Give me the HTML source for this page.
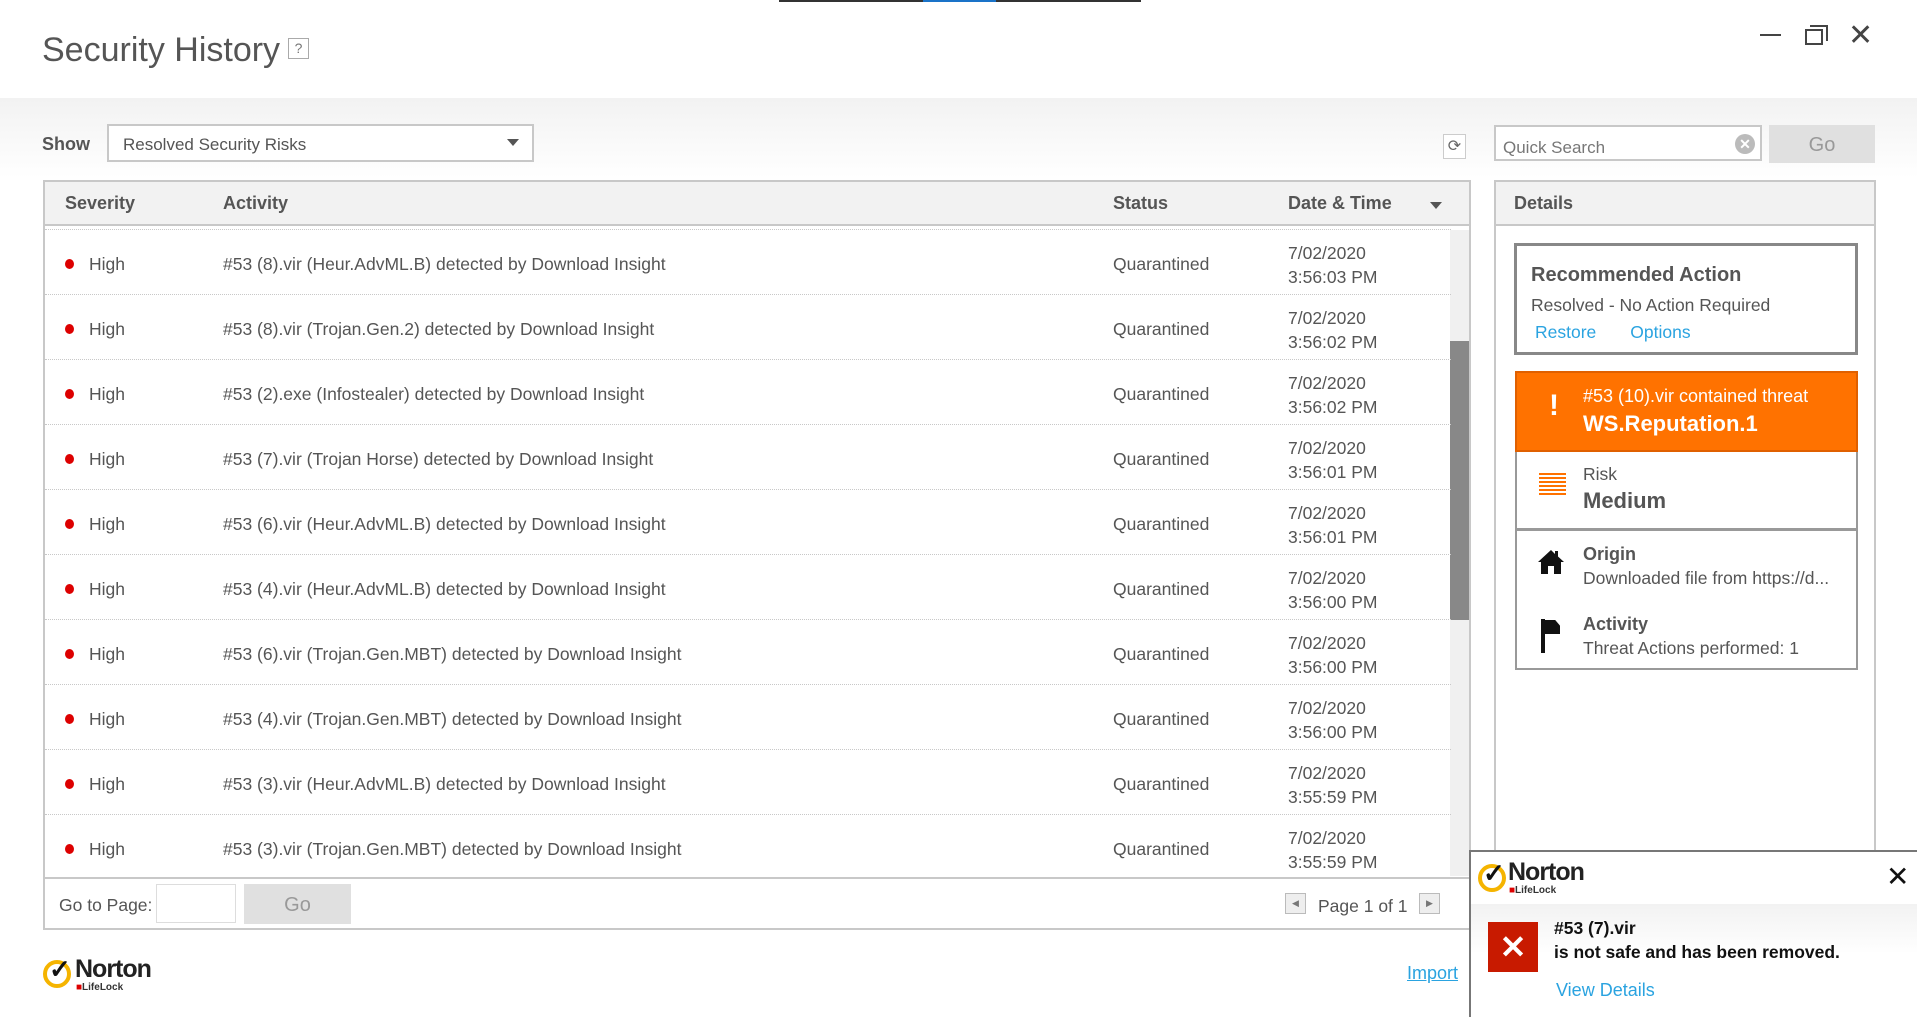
<!DOCTYPE html>
<html><head><meta charset="utf-8"><style>
*{box-sizing:border-box;margin:0;padding:0}
html{width:1917px;height:1017px;overflow:hidden}
body{width:1917px;height:1017px;position:relative;overflow:hidden;background:#fff;font-family:"Liberation Sans",sans-serif;color:#555}
.a{position:absolute}
.band{left:0;top:98px;width:1917px;height:80px;background:linear-gradient(#f2f2f2,#fff)}
.row{position:absolute;left:0;width:1406px;height:65px;border-bottom:1px dotted #c8c8c8;font-size:17.5px;color:#555}
.row span{position:absolute}
.dot{left:20px;top:29px;width:9px;height:10px;border-radius:50%;background:#d00}
.link{color:#2aa3e0}
</style></head><body>
<div class="a" style="left:779px;top:0;width:362px;height:2px;background:#333"></div>
<div class="a" style="left:923px;top:0;width:73px;height:2px;background:#1a73c8"></div>
<div class="a band"></div>
<div class="a" style="left:42px;top:31px;font-size:34px;color:#555">Security History</div>
<div class="a" style="left:288px;top:38px;width:21px;height:21px;border:1px solid #aaa;font-size:14px;text-align:center;line-height:19px;color:#777">?</div>
<div class="a" style="left:1760px;top:34px;width:21px;height:2px;background:#444"></div>
<div class="a" style="left:1805px;top:29px;width:18px;height:16px;border:2px solid #444"></div>
<div class="a" style="left:1810px;top:25px;width:18px;height:16px;border-top:2px solid #444;border-right:2px solid #444"></div>
<div class="a" style="left:1848px;top:18px;font-size:30px;color:#444">✕</div>

<div class="a" style="left:42px;top:134px;font-size:18px;font-weight:bold;color:#555">Show</div>
<div class="a" style="left:107px;top:124px;width:427px;height:38px;border:2px solid #c8c8c8;background:#fff;font-size:17px;padding:9px 14px;color:#555">Resolved Security Risks</div>
<div class="a" style="left:507px;top:139px;border-left:6px solid transparent;border-right:6px solid transparent;border-top:7px solid #555"></div>
<div class="a" style="left:1443px;top:134px;width:23px;height:25px;border:1px solid #ccc;background:#fff;font-size:16px;text-align:center;line-height:23px;color:#666">⟳</div>

<div class="a" style="left:1494px;top:125px;width:268px;height:36px;border:2px solid #c8c8c8;background:#fff;font-size:17px;padding:11px 7px 0;color:#777">Quick Search</div>
<div class="a" style="left:1735px;top:134px;width:20px;height:20px;border-radius:50%;background:#bbb;color:#fff;font-size:14px;text-align:center;line-height:20px;font-weight:bold">✕</div>
<div class="a" style="left:1769px;top:125px;width:106px;height:38px;background:#e0e0e0;font-size:20px;text-align:center;line-height:40px;color:#999">Go</div>

<div class="a" style="left:43px;top:180px;width:1428px;height:750px;border:2px solid #c8c8c8;background:#fff;overflow:hidden">
 <div class="a" style="left:0;top:0;width:1428px;height:44px;background:#f2f2f2;border-bottom:2px solid #c8c8c8;font-size:18px;font-weight:bold;color:#555">
  <span class="a" style="left:20px;top:11px">Severity</span>
  <span class="a" style="left:178px;top:11px">Activity</span>
  <span class="a" style="left:1068px;top:11px">Status</span>
  <span class="a" style="left:1243px;top:11px">Date &amp; Time</span>
  <span class="a" style="left:1385px;top:20px;border-left:6px solid transparent;border-right:6px solid transparent;border-top:7px solid #555"></span>
 </div>
 <div class="a" style="left:0;top:47px;width:1406px;height:0;border-top:1px dotted #c8c8c8"></div>
 <div class="a" style="left:1405px;top:48px;width:19px;height:646px;background:#f0f0f0"></div>
 <div class="a" style="left:1405px;top:159px;width:19px;height:279px;background:#888"></div>
 <div id="rows"></div>
 <div class="a" style="left:0;top:695px;width:1428px;height:53px;border-top:2px solid #c8c8c8;background:#fff;font-size:17.5px">
  <span class="a" style="left:14px;top:16px">Go to Page:</span>
  <span class="a" style="left:111px;top:5px;width:80px;height:39px;border:1px solid #ddd"></span>
  <span class="a" style="left:199px;top:5px;width:107px;height:40px;background:#e0e0e0;color:#999;font-size:20px;text-align:center;line-height:42px">Go</span>
  <span class="a" style="left:1240px;top:14px;width:21px;height:21px;border:1px solid #bbb;background:#eee;font-size:9px;text-align:center;line-height:19px;color:#777">◀</span>
  <span class="a" style="left:1273px;top:17px">Page 1 of 1</span>
  <span class="a" style="left:1374px;top:14px;width:21px;height:21px;border:1px solid #bbb;background:#eee;font-size:9px;text-align:center;line-height:19px;color:#777">▶</span>
 </div>
</div>

<div class="a" style="left:1494px;top:180px;width:382px;height:837px;border:2px solid #c8c8c8;border-bottom:none;background:#fff">
 <div class="a" style="left:0;top:0;width:378px;height:44px;background:#f2f2f2;border-bottom:2px solid #c8c8c8;font-size:18px;font-weight:bold;padding:11px 18px">Details</div>
 <div class="a" style="left:18px;top:61px;width:344px;height:112px;border:3px solid #888;padding:18px 14px 0">
  <div style="font-size:20px;font-weight:bold;color:#555">Recommended Action</div>
  <div style="font-size:17.5px;margin-top:8px">Resolved - No Action Required</div>
  <div style="font-size:17.5px;margin-top:6px"><span class="link" style="margin-left:4px">Restore</span><span class="link" style="margin-left:34px">Options</span></div>
 </div>
 <div class="a" style="left:19px;top:189px;width:343px;height:81px;background:#ff7200;border:2px solid #e06000;color:#fff">
  <span class="a" style="left:32px;top:16px;font-size:30px;font-weight:bold">!</span>
  <span class="a" style="left:66px;top:13px;font-size:18px">#53 (10).vir contained threat</span>
  <span class="a" style="left:66px;top:38px;font-size:22px;font-weight:bold">WS.Reputation.1</span>
 </div>
 <div class="a" style="left:19px;top:270px;width:343px;height:78px;border:2px solid #999;border-top:none">
  <span class="a" style="left:22px;top:21px;width:27px;height:22px;background:repeating-linear-gradient(#ff7200 0 2px,#fff 2px 4px)"></span>
  <span class="a" style="left:66px;top:12px;font-size:17.5px">Risk</span>
  <span class="a" style="left:66px;top:36px;font-size:22px;font-weight:bold">Medium</span>
 </div>
 <div class="a" style="left:19px;top:347px;width:343px;height:141px;border:2px solid #999">
  <svg class="a" style="left:20px;top:18px" width="28" height="26" viewBox="0 0 28 26"><path d="M14 1 L1 13 L4 13 L4 25 L11 25 L11 17 L17 17 L17 25 L24 25 L24 13 L27 13 L21 7.5 L21 2 L18 2 L18 5 Z" fill="#111"/></svg>
  <span class="a" style="left:66px;top:13px;font-size:18px;font-weight:bold">Origin</span>
  <span class="a" style="left:66px;top:37px;font-size:17.5px">Downloaded file from https://d...</span>
  <span class="a" style="left:24px;top:88px;width:4px;height:34px;background:#111"></span>
  <span class="a" style="left:27px;top:89px;width:16px;height:14px;background:#111;clip-path:polygon(0 0,70% 0,100% 40%,100% 100%,0 100%)"></span>
  <span class="a" style="left:66px;top:83px;font-size:18px;font-weight:bold">Activity</span>
  <span class="a" style="left:66px;top:107px;font-size:17.5px">Threat Actions performed: 1</span>
 </div>
</div>

<div class="a" style="left:43px;top:960px;width:28px;height:28px;border-radius:50%;border:4px solid #f5b400"></div>
<div class="a" style="left:49px;top:954px;font-size:26px;font-weight:bold;color:#111">✓</div>
<div class="a" style="left:75px;top:955px;font-size:25px;font-weight:bold;color:#222;letter-spacing:-1px">Norton</div>
<div class="a" style="left:76px;top:982px;font-size:10px;font-weight:bold;color:#333"><span style="color:#d00">■</span>LifeLock</div>
<div class="a" style="left:1407px;top:963px;font-size:18px;color:#2aa3e0;text-decoration:underline">Import</div>

<div class="a" style="left:1469px;top:850px;width:448px;height:167px;border:2px solid #777;border-right:none;border-bottom:none;background:#fff;overflow:hidden">
 <div class="a" style="left:0;top:52px;width:448px;height:50px;background:linear-gradient(#f2f2f2,#fff)"></div>
 <div class="a" style="left:7px;top:12px;width:28px;height:28px;border-radius:50%;border:4px solid #f5b400"></div>
 <div class="a" style="left:12px;top:6px;font-size:26px;font-weight:bold;color:#111">✓</div>
 <div class="a" style="left:37px;top:6px;font-size:25px;font-weight:bold;color:#222;letter-spacing:-1px">Norton</div>
 <div class="a" style="left:38px;top:33px;font-size:10px;font-weight:bold;color:#333"><span style="color:#d00">■</span>LifeLock</div>
 <div class="a" style="left:415px;top:8px;font-size:28px;color:#111">✕</div>
 <div class="a" style="left:17px;top:70px;width:50px;height:50px;background:#c81a00;color:#fff;font-size:32px;font-weight:bold;text-align:center;line-height:50px">✕</div>
 <div class="a" style="left:83px;top:66px;font-size:17.5px;font-weight:bold;color:#111">#53 (7).vir</div>
 <div class="a" style="left:83px;top:90px;font-size:17.5px;font-weight:bold;color:#111">is not safe and has been removed.</div>
 <div class="a" style="left:85px;top:128px;font-size:18px;color:#2aa3e0">View Details</div>
</div>

<script>
var d=[["#53 (8).vir (Heur.AdvML.B) detected by Download Insight","3:56:03 PM"],["#53 (8).vir (Trojan.Gen.2) detected by Download Insight","3:56:02 PM"],["#53 (2).exe (Infostealer) detected by Download Insight","3:56:02 PM"],["#53 (7).vir (Trojan Horse) detected by Download Insight","3:56:01 PM"],["#53 (6).vir (Heur.AdvML.B) detected by Download Insight","3:56:01 PM"],["#53 (4).vir (Heur.AdvML.B) detected by Download Insight","3:56:00 PM"],["#53 (6).vir (Trojan.Gen.MBT) detected by Download Insight","3:56:00 PM"],["#53 (4).vir (Trojan.Gen.MBT) detected by Download Insight","3:56:00 PM"],["#53 (3).vir (Heur.AdvML.B) detected by Download Insight","3:55:59 PM"],["#53 (3).vir (Trojan.Gen.MBT) detected by Download Insight","3:55:59 PM"]];
var h="";d.forEach(function(r,i){h+='<div class="row" style="top:'+(48+i*65)+'px"><span class="dot"></span><span style="left:44px;top:24px">High</span><span style="left:178px;top:24px">'+r[0]+'</span><span style="left:1068px;top:24px">Quarantined</span><span style="left:1243px;top:11px;line-height:24px">7/02/2020<br>'+r[1]+'</span></div>';});
document.getElementById("rows").outerHTML=h;
</script>
</body></html>
